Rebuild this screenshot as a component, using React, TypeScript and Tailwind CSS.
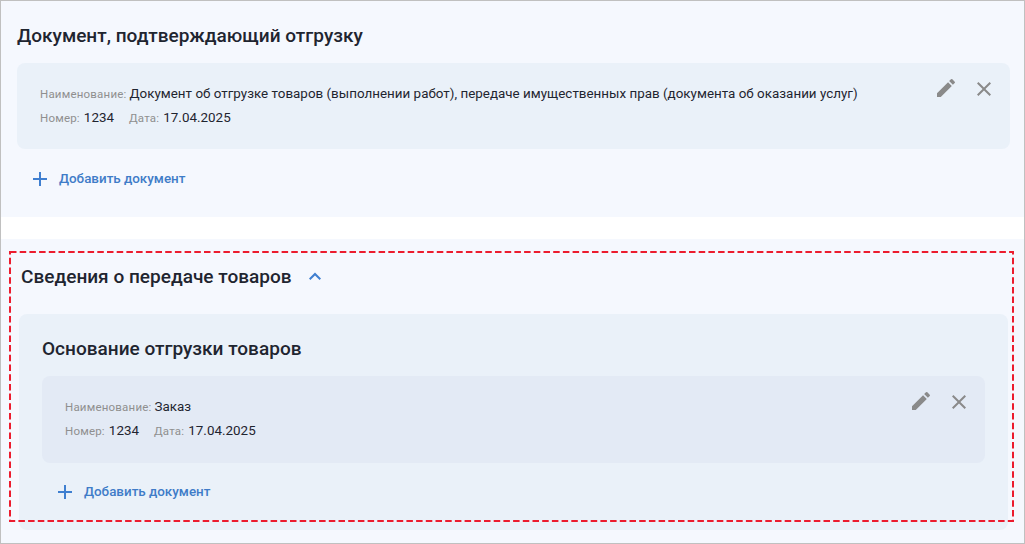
const ACTION_PENCIL = "M3 17.25V21h3.75L17.81 9.94l-3.75-3.75L3 17.25zM20.71 7.04a1 1 0 0 0 0-1.41l-2.34-2.34a1 1 0 0 0-1.41 0l-1.83 1.83 3.75 3.75 1.83-1.83z";

function DocCard({ name, cardClass }: { name: string; cardClass: string }) {
  const label = "text-[11.5px] tracking-[0.2px] text-[#8f8f8f] translate-y-px";
  const value = "text-[13.4px] tracking-[0.01px] text-[#1f2530]";
  return (
    <div className={`flex justify-between rounded-lg pl-[23px] pt-[19px] pr-[14px] ${cardClass}`}>
      <div className="flex flex-col">
        <div className="flex h-6 items-center gap-[3px]">
          <span className={label}>Наименование:</span>
          <span className={value}>{name}</span>
        </div>
        <div className="flex h-6 items-center">
          <span className={label}>Номер:</span>
          <span className={`ml-[4px] ${value}`}>1234</span>
          <span className={`ml-[15px] ${label}`}>Дата:</span>
          <span className={`ml-[4px] ${value}`}>17.04.2025</span>
        </div>
      </div>
      <div className="-mt-[6px] flex h-6 shrink-0 items-start gap-[14px]">
        <svg width="24" height="24" viewBox="0 0 24 24" fill="#8a8a8a"><path d={ACTION_PENCIL} /></svg>
        <svg width="24" height="24" viewBox="0 0 24 24" fill="#8a8a8a" className="translate-y-px"><path d="M19 6.41 17.59 5 12 10.59 6.41 5 5 6.41 10.59 12 5 17.59 6.41 19 12 13.41 17.59 19 19 17.59 13.41 12z" /></svg>
      </div>
    </div>
  );
}

function AddDoc() {
  return (
    <div className="flex h-6 items-center pl-[11px] text-[13.4px] font-medium text-[#3f7cc8]">
      <svg width="24" height="24" viewBox="0 0 24 24" fill="#3f7fd0"><path d="M19 13h-6v6h-2v-6H5v-2h6V5h2v6h6v2z" /></svg>
      <span className="ml-[7px] translate-y-px">Добавить документ</span>
    </div>
  );
}

export default function App() {
  return (
    <div className="relative flex h-[544px] w-[1025px] flex-col overflow-hidden border border-[#c0c0c0] bg-white font-['Roboto',sans-serif]">
      <section className="h-[216px] shrink-0 bg-[#f5f8fe] pl-4 pr-[14px] pt-[23px]">
        <h2 className="h-6 text-[19.05px] font-medium leading-6 text-[#1f2530]">Документ, подтверждающий отгрузку</h2>
        <div className="mt-[15px]"><DocCard name="Документ об отгрузке товаров (выполнении работ), передаче имущественных прав (документа об оказании услуг)" cardClass="h-[86px] bg-[#eaf1f9]" /></div>
        <div className="mt-[17.5px]"><AddDoc /></div>
      </section>
      <section className="mt-[22px] flex min-h-0 flex-1 flex-col bg-[#f5f8fe] pl-[18px] pr-4 pt-[26px]">
        <div className="flex h-6 items-center pl-[2px] text-[19.05px] font-medium text-[#1f2530]">
          <span>Сведения о передаче товаров</span>
          <svg width="24" height="24" viewBox="0 0 24 24" fill="#3f7fd0" className="ml-[11px] -translate-y-px"><path d="M12 8.59 6 14.59 7.41 16 12 11.41 16.59 16 18 14.59z" /></svg>
        </div>
        <div className="mt-[25px] h-[216px] rounded-lg bg-[#eaf1f9] pl-[23px] pr-[23px] pt-[23px]">
          <h3 className="h-6 text-[19.05px] font-medium leading-6 text-[#1f2530]">Основание отгрузки товаров</h3>
          <div className="mt-[15px]"><DocCard name="Заказ" cardClass="h-[87px] bg-[#e3eaf5]" /></div>
          <div className="mt-[16.5px]"><AddDoc /></div>
        </div>
      </section>
      <svg width="1005" height="271" className="pointer-events-none absolute left-[8px] top-[250px]" fill="none">
        <rect x="1" y="1" width="1003" height="269" stroke="#ec1c2e" strokeWidth="2" strokeDasharray="6.5 3.2" />
      </svg>
    </div>
  );
}
